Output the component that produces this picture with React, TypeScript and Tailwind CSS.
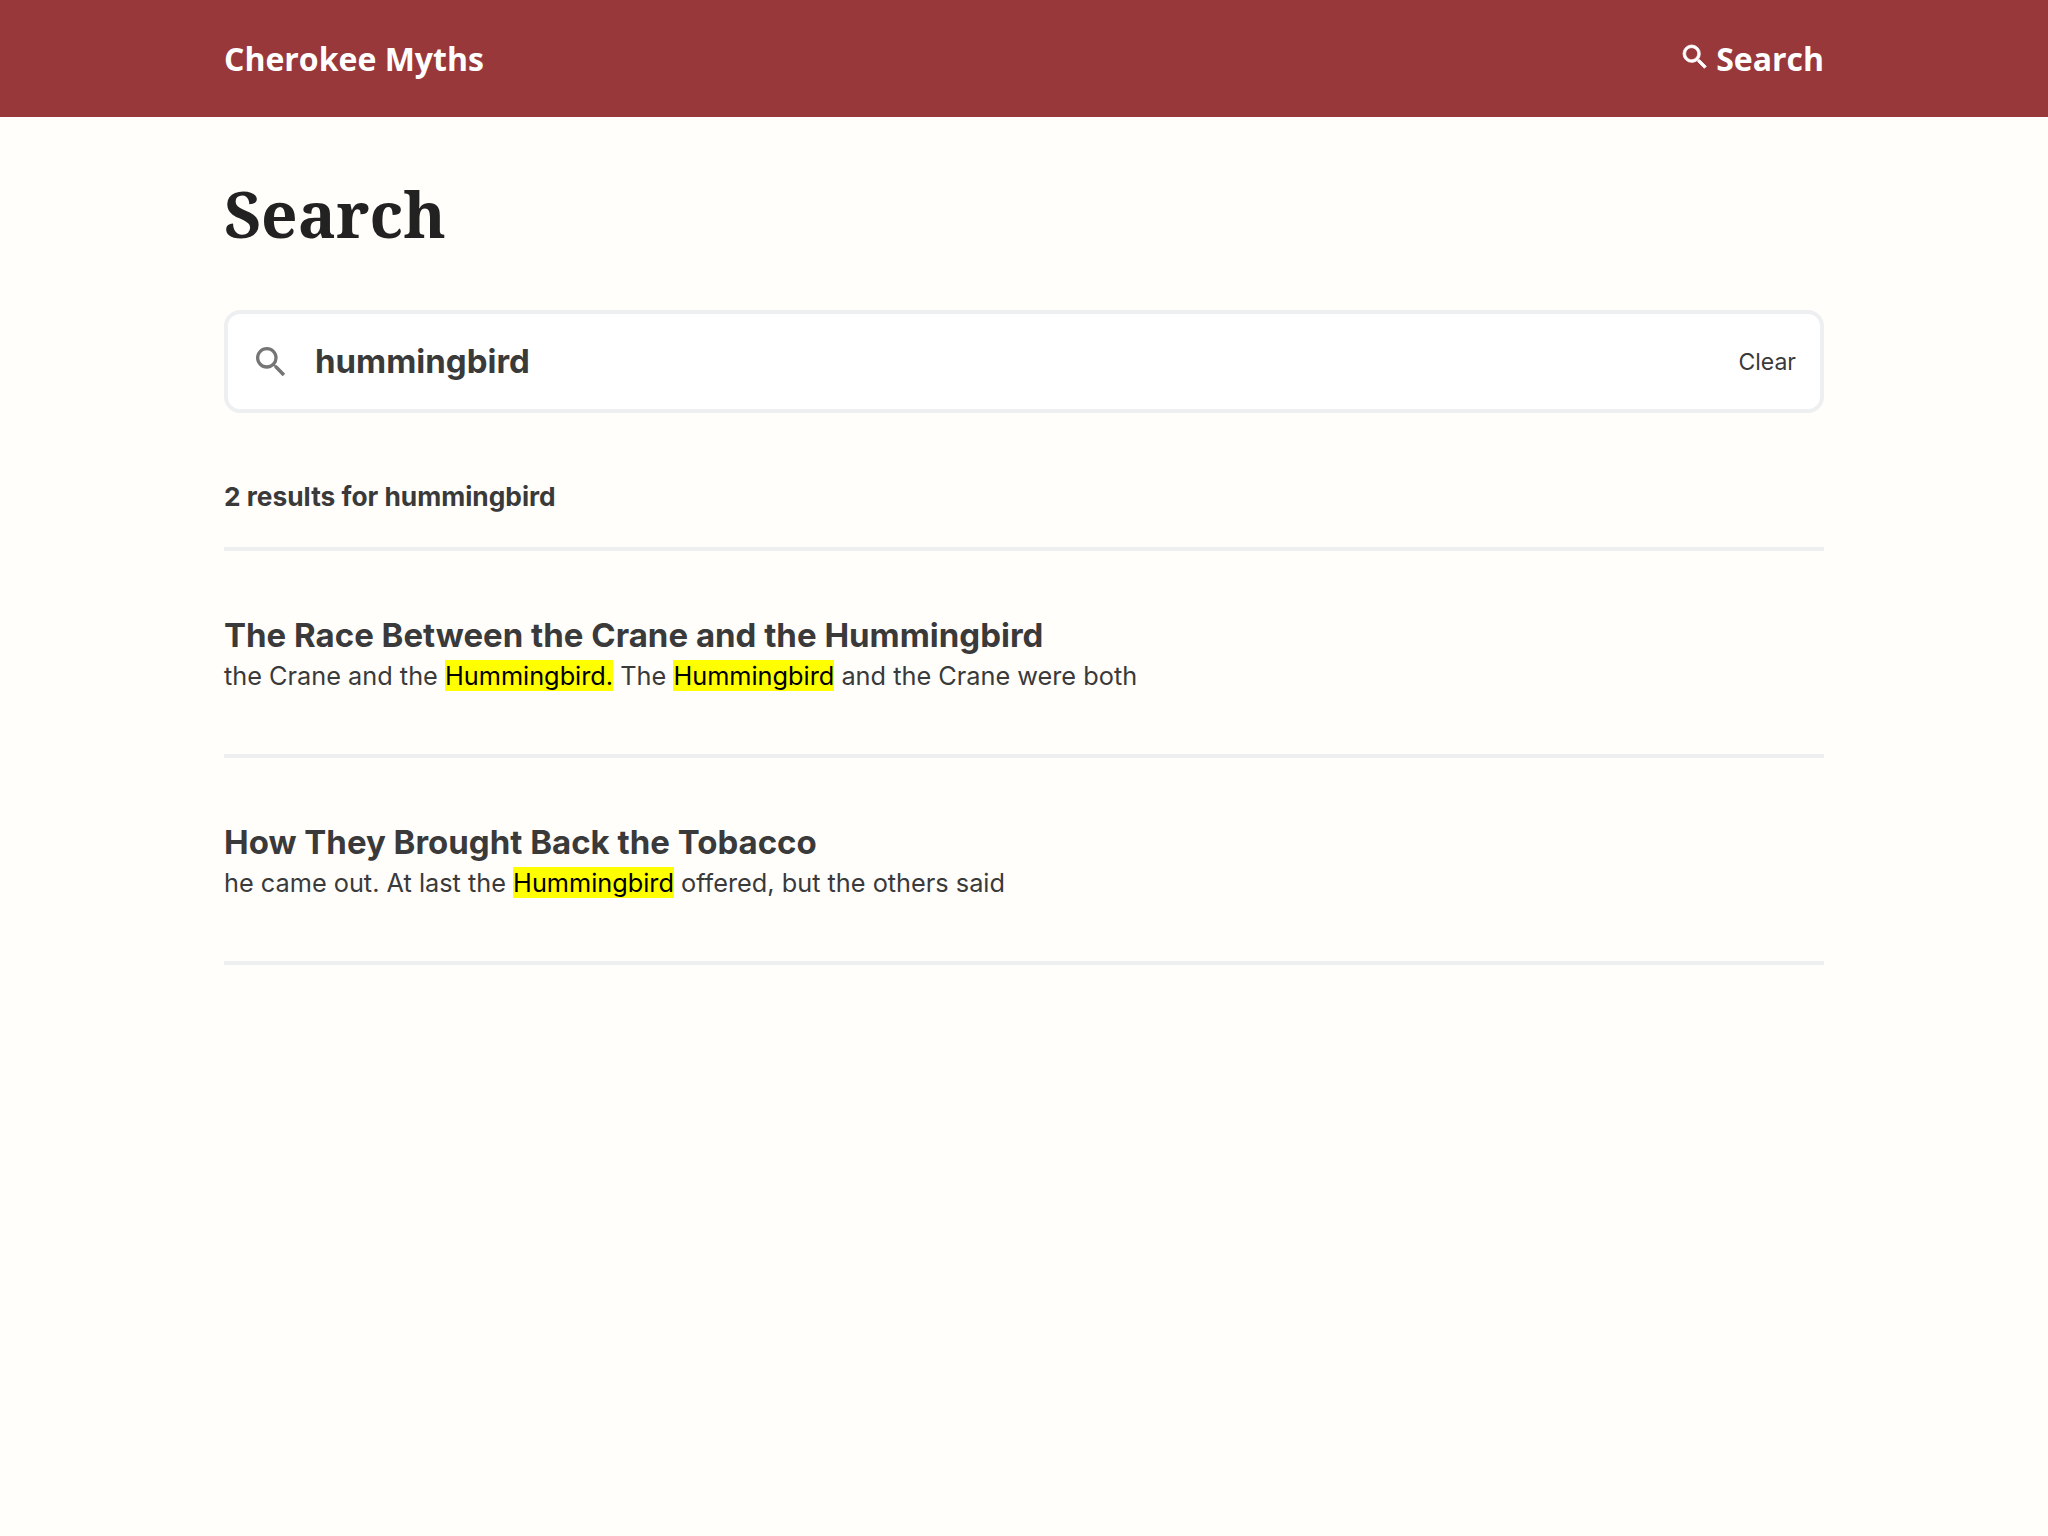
import React from 'react';

const searchPath = 'M15.5 14h-.79l-.28-.27A6.471 6.471 0 0 0 16 9.5 6.5 6.5 0 1 0 9.5 16c1.61 0 3.09-.59 4.23-1.57l.27.28v.79l5 4.99L20.49 19l-4.99-5zm-6 0C7.01 14 5 11.99 5 9.5S7.01 5 9.5 5 14 7.01 14 9.5 11.99 14 9.5 14z';

const SearchIcon: React.FC<{ className: string; bold?: boolean }> = ({ className, bold }) => (
    <svg viewBox="0 0 24 24" fill="currentColor" stroke="currentColor" strokeWidth={bold ? 0.6 : 0} className={className}>
        <path d={searchPath} />
    </svg>
);

const Mark: React.FC<{ children: React.ReactNode }> = ({ children }) => (
    <mark className="bg-[#ffff00] text-black">{children}</mark>
);

const results: { title: string; snippet: React.ReactNode }[] = [
    {
        title: 'The Race Between the Crane and the Hummingbird',
        snippet: <>the Crane and the <Mark>Hummingbird.</Mark> The <Mark>Hummingbird</Mark> and the Crane were both</>,
    },
    {
        title: 'How They Brought Back the Tobacco',
        snippet: <>he came out. At last the <Mark>Hummingbird</Mark> offered, but the others said</>,
    },
];

const App: React.FC = () => {
    return (
        <div className="min-h-[1536px] bg-[#fffefb] font-['Inter',sans-serif] text-[#3a3a3a]">
            <header className="h-[117px] bg-[#98383b] text-white font-['Open_Sans',sans-serif] font-bold text-[32px]">
                <div className="w-[1600px] h-full mx-auto flex items-center justify-between">
                    <a>Cherokee Myths</a>
                    <a className="flex items-center gap-[5px]">
                        <SearchIcon bold className="w-[32px] h-[32px] -mt-[3px]" />
                        Search
                    </a>
                </div>
            </header>
            <main className="w-[1600px] mx-auto">
                <h1 className="pt-[55px] h-[193px] font-['Noto_Serif','DejaVu_Serif',serif] font-bold text-[64px] leading-[84px] text-[#222222]">Search</h1>
                <div className="h-[103px] flex items-center border-[4px] border-[#eeeff1] rounded-[16px] bg-white pl-[23px] pr-[24px]">
                    <SearchIcon className="w-[40px] h-[40px] text-[#757575]" />
                    <input readOnly value="hummingbird" className="flex-1 ml-[24px] outline-none font-bold text-[33px] text-[#3a3a3a]" />
                    <button className="pt-[2px] text-[23px] text-[#3a3a3a]">Clear</button>
                </div>
                <p className="mt-[67px] h-[67px] font-bold text-[26.3px] leading-[34px]">2 results for hummingbird</p>
                <div className="border-t-[4px] border-[#eeeff1]">
                    {results.map(r => (
                        <article key={r.title} className="h-[207px] pt-[62px] border-b-[4px] border-[#eeeff1]">
                            <h2 className="font-bold text-[33px] leading-[44px]">{r.title}</h2>
                            <p className="text-[25.3px] leading-[38px]">{r.snippet}</p>
                        </article>
                    ))}
                </div>
            </main>
        </div>
    );
};

export default App;
